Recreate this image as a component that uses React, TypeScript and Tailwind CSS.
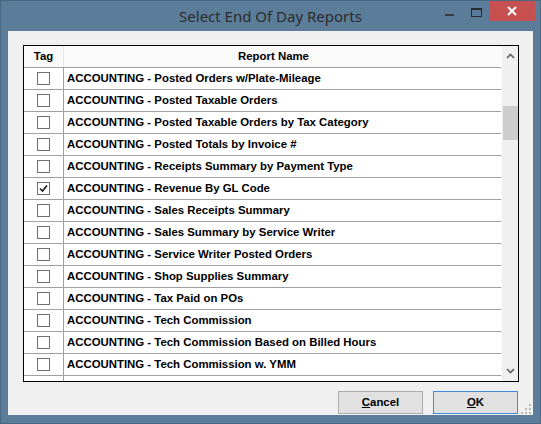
import React from 'react';

const reports = [
  { name: 'ACCOUNTING - Posted Orders w/Plate-Mileage', tagged: false },
  { name: 'ACCOUNTING - Posted Taxable Orders', tagged: false },
  { name: 'ACCOUNTING - Posted Taxable Orders by Tax Category', tagged: false },
  { name: 'ACCOUNTING - Posted Totals by Invoice #', tagged: false },
  { name: 'ACCOUNTING - Receipts Summary by Payment Type', tagged: false },
  { name: 'ACCOUNTING - Revenue By GL Code', tagged: true },
  { name: 'ACCOUNTING - Sales Receipts Summary', tagged: false },
  { name: 'ACCOUNTING - Sales Summary by Service Writer', tagged: false },
  { name: 'ACCOUNTING - Service Writer Posted Orders', tagged: false },
  { name: 'ACCOUNTING - Shop Supplies Summary', tagged: false },
  { name: 'ACCOUNTING - Tax Paid on POs', tagged: false },
  { name: 'ACCOUNTING - Tech Commission', tagged: false },
  { name: 'ACCOUNTING - Tech Commission Based on Billed Hours', tagged: false },
  { name: 'ACCOUNTING - Tech Commission w. YMM', tagged: false },
];

const CheckBox = ({ checked }: { checked: boolean }) => (
  <div className="w-[13px] h-[13px] border border-[#707070] bg-white flex items-center justify-center">
    {checked && (
      <svg width="9" height="9" viewBox="0 0 9 9">
        <path d="M1 4.5 L3.5 7 L8 1.5" fill="none" stroke="#1a1a1a" strokeWidth="1.6" />
      </svg>
    )}
  </div>
);

export default function App() {
  return (
    <div
      className="w-[541px] h-[424px] bg-[#5b7d9a] border border-[#4a6882] flex flex-col overflow-hidden"
      style={{ fontFamily: '"Liberation Sans", Arial, sans-serif' }}
    >
      {/* title bar */}
      <div className="h-[30px] flex relative">
        <div
          className="flex-1 text-center pt-[4px] text-[15px] text-[#2b2b2b]"
          style={{ fontFamily: '"Noto Sans", "Open Sans", sans-serif' }}
        >
          Select End Of Day Reports
        </div>
        <div className="absolute left-[444px] top-[13px] w-[9px] h-[2px] bg-[#3b3b3b]" />
        <div className="absolute left-[470px] top-[7px] w-[11px] h-[9px] border border-[#2b2b2b] border-t-2" />
        <div className="absolute left-[488px] top-[-1px] w-[46px] h-[21px] bg-[#c75050] flex items-center justify-center">
          <svg width="10" height="10" viewBox="0 0 10 10">
            <path d="M1 1 L9 9 M9 1 L1 9" stroke="white" strokeWidth="2" />
          </svg>
        </div>
      </div>

      {/* client area */}
      <div className="mx-[7px] h-[384px] bg-[#f0f0f0] flex flex-col pt-[14px] pl-[15px] pr-[14px] relative">
        <div className="h-[337px] border border-black bg-white flex overflow-hidden">
          <div className="flex-1 flex flex-col">
            <div className="h-[22px] shrink-0 flex bg-[#fafafa] border-b border-[#a0a0a0] text-[11.4px] font-bold text-black">
              <div className="w-[40px] border-r border-[#e3e8ef] flex items-center justify-center">Tag</div>
              <div className="flex-1 flex items-center justify-center pr-[18px]">Report Name</div>
            </div>
            {reports.map((r) => (
              <div key={r.name} className="h-[22px] shrink-0 flex border-b border-[#a0a0a0]">
                <div className="w-[40px] border-r border-[#a0a0a0] flex items-center justify-center">
                  <CheckBox checked={r.tagged} />
                </div>
                <div className="flex-1 flex items-center pl-[3px] pt-[1px] text-[11.4px] font-bold text-black whitespace-nowrap">
                  {r.name}
                </div>
              </div>
            ))}
            <div className="h-[22px] shrink-0 flex">
              <div className="w-[40px] border-r border-[#a0a0a0] flex items-center justify-center">
                <CheckBox checked={false} />
              </div>
              <div className="flex-1" />
            </div>
          </div>
          <div className="w-[17px] shrink-0 bg-[#f0f0f0] flex flex-col items-center border-l border-[#fafafa]">
            <div className="h-[18px] flex items-center justify-center pt-[2px]">
              <svg width="9" height="6" viewBox="0 0 9 6">
                <path d="M1 5 L4.5 1.5 L8 5" fill="none" stroke="#606060" strokeWidth="1.6" />
              </svg>
            </div>
            <div className="mt-[42px] w-[15px] h-[34px] bg-[#cdcdcd]" />
            <div className="flex-1" />
            <div className="h-[18px] flex items-center justify-center pb-[2px]">
              <svg width="9" height="6" viewBox="0 0 9 6">
                <path d="M1 1 L4.5 4.5 L8 1" fill="none" stroke="#606060" strokeWidth="1.6" />
              </svg>
            </div>
          </div>
        </div>

        <div className="flex justify-end gap-[10px] mt-[9px] pr-[1px]">
          <button className="w-[85px] h-[23px] bg-[#e1e1e1] border border-[#adadad] text-[11.4px] font-bold text-black">
            <span className="underline">C</span>ancel
          </button>
          <button className="w-[85px] h-[23px] bg-[#e1e1e1] border border-[#3c8ce4] text-[11.4px] font-bold text-black">
            <span className="underline">O</span>K
          </button>
        </div>

        <svg className="absolute right-[2px] bottom-[1px]" width="10" height="10" viewBox="0 0 10 10">
          <g fill="#b8b8b8">
            <rect x="8" y="0" width="2" height="2" />
            <rect x="4" y="4" width="2" height="2" />
            <rect x="8" y="4" width="2" height="2" />
            <rect x="0" y="8" width="2" height="2" />
            <rect x="4" y="8" width="2" height="2" />
            <rect x="8" y="8" width="2" height="2" />
          </g>
        </svg>
      </div>
    </div>
  );
}
